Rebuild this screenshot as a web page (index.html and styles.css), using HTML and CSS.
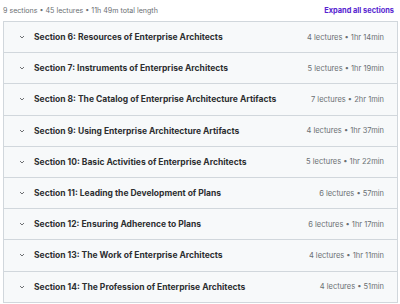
FILE: index.html
```html
<!DOCTYPE html>
<html lang="en">
<head>
<meta charset="UTF-8" />
<title>Course content</title>
<link rel="stylesheet" href="styles.css">
</head>
<body>

<div class="content-header">
  <span class="summary">9 sections &bull; 45 lectures &bull; 11h 49m total length</span>
  <button class="expand-all">Expand all sections</button>
</div>

<div class="sections">
  <div class="section">
    <span class="chevron"><svg width="8" height="8" viewBox="0 0 8 8"><path d="M2 3 L4 5 L6 3" fill="none" stroke="#4a4d50" stroke-width="0.8"/></svg></span>
    <span class="section-title">Section 6: Resources of Enterprise Architects</span>
    <span class="section-meta">4 lectures &bull; 1hr 14min</span>
  </div>
  <div class="section">
    <span class="chevron"><svg width="8" height="8" viewBox="0 0 8 8"><path d="M2 3 L4 5 L6 3" fill="none" stroke="#4a4d50" stroke-width="0.8"/></svg></span>
    <span class="section-title">Section 7: Instruments of Enterprise Architects</span>
    <span class="section-meta">5 lectures &bull; 1hr 19min</span>
  </div>
  <div class="section">
    <span class="chevron"><svg width="8" height="8" viewBox="0 0 8 8"><path d="M2 3 L4 5 L6 3" fill="none" stroke="#4a4d50" stroke-width="0.8"/></svg></span>
    <span class="section-title">Section 8: The Catalog of Enterprise Architecture Artifacts</span>
    <span class="section-meta">7 lectures &bull; 2hr 1min</span>
  </div>
  <div class="section">
    <span class="chevron"><svg width="8" height="8" viewBox="0 0 8 8"><path d="M2 3 L4 5 L6 3" fill="none" stroke="#4a4d50" stroke-width="0.8"/></svg></span>
    <span class="section-title">Section 9: Using Enterprise Architecture Artifacts</span>
    <span class="section-meta">4 lectures &bull; 1hr 37min</span>
  </div>
  <div class="section">
    <span class="chevron"><svg width="8" height="8" viewBox="0 0 8 8"><path d="M2 3 L4 5 L6 3" fill="none" stroke="#4a4d50" stroke-width="0.8"/></svg></span>
    <span class="section-title">Section 10: Basic Activities of Enterprise Architects</span>
    <span class="section-meta">5 lectures &bull; 1hr 22min</span>
  </div>
  <div class="section">
    <span class="chevron"><svg width="8" height="8" viewBox="0 0 8 8"><path d="M2 3 L4 5 L6 3" fill="none" stroke="#4a4d50" stroke-width="0.8"/></svg></span>
    <span class="section-title">Section 11: Leading the Development of Plans</span>
    <span class="section-meta">6 lectures &bull; 57min</span>
  </div>
  <div class="section">
    <span class="chevron"><svg width="8" height="8" viewBox="0 0 8 8"><path d="M2 3 L4 5 L6 3" fill="none" stroke="#4a4d50" stroke-width="0.8"/></svg></span>
    <span class="section-title">Section 12: Ensuring Adherence to Plans</span>
    <span class="section-meta">6 lectures &bull; 1hr 17min</span>
  </div>
  <div class="section">
    <span class="chevron"><svg width="8" height="8" viewBox="0 0 8 8"><path d="M2 3 L4 5 L6 3" fill="none" stroke="#4a4d50" stroke-width="0.8"/></svg></span>
    <span class="section-title">Section 13: The Work of Enterprise Architects</span>
    <span class="section-meta">4 lectures &bull; 1hr 11min</span>
  </div>
  <div class="section">
    <span class="chevron"><svg width="8" height="8" viewBox="0 0 8 8"><path d="M2 3 L4 5 L6 3" fill="none" stroke="#4a4d50" stroke-width="0.8"/></svg></span>
    <span class="section-title">Section 14: The Profession of Enterprise Architects</span>
    <span class="section-meta">4 lectures &bull; 51min</span>
  </div>
</div>

</body>
</html>
```

FILE: styles.css
```css
body {
  margin: 0;
  padding: 0 2px 0 3px;
  font-family: Inter, 'Noto Sans', sans-serif;
  color: #2d2f31;
  background: #fff;
}

.content-header {
  display: flex;
  justify-content: space-between;
  align-items: center;
  height: 21px;
  padding-right: 4px;
}

.summary {
  font-size: 7.1px;
  color: #6a6f73;
}

.expand-all {
  border: none;
  background: none;
  padding: 0;
  font-family: inherit;
  font-size: 7.4px;
  font-weight: 700;
  color: #5624d0;
  cursor: pointer;
}

.sections {
  border: 1px solid #d1d7dc;
}

.section {
  display: flex;
  align-items: center;
  height: 30.2px;
  padding: 0 13px 0 14px;
  background: #f7f9fa;
  border-bottom: 1px solid #d1d7dc;
}

.section:last-child {
  border-bottom: none;
}

.chevron {
  display: flex;
  width: 8px;
  margin-right: 8px;
}

.section-title {
  flex: 1;
  font-size: 8.5px;
  font-weight: 700;
}

.section-meta {
  font-size: 7.5px;
  color: #6a6f73;
}
```
